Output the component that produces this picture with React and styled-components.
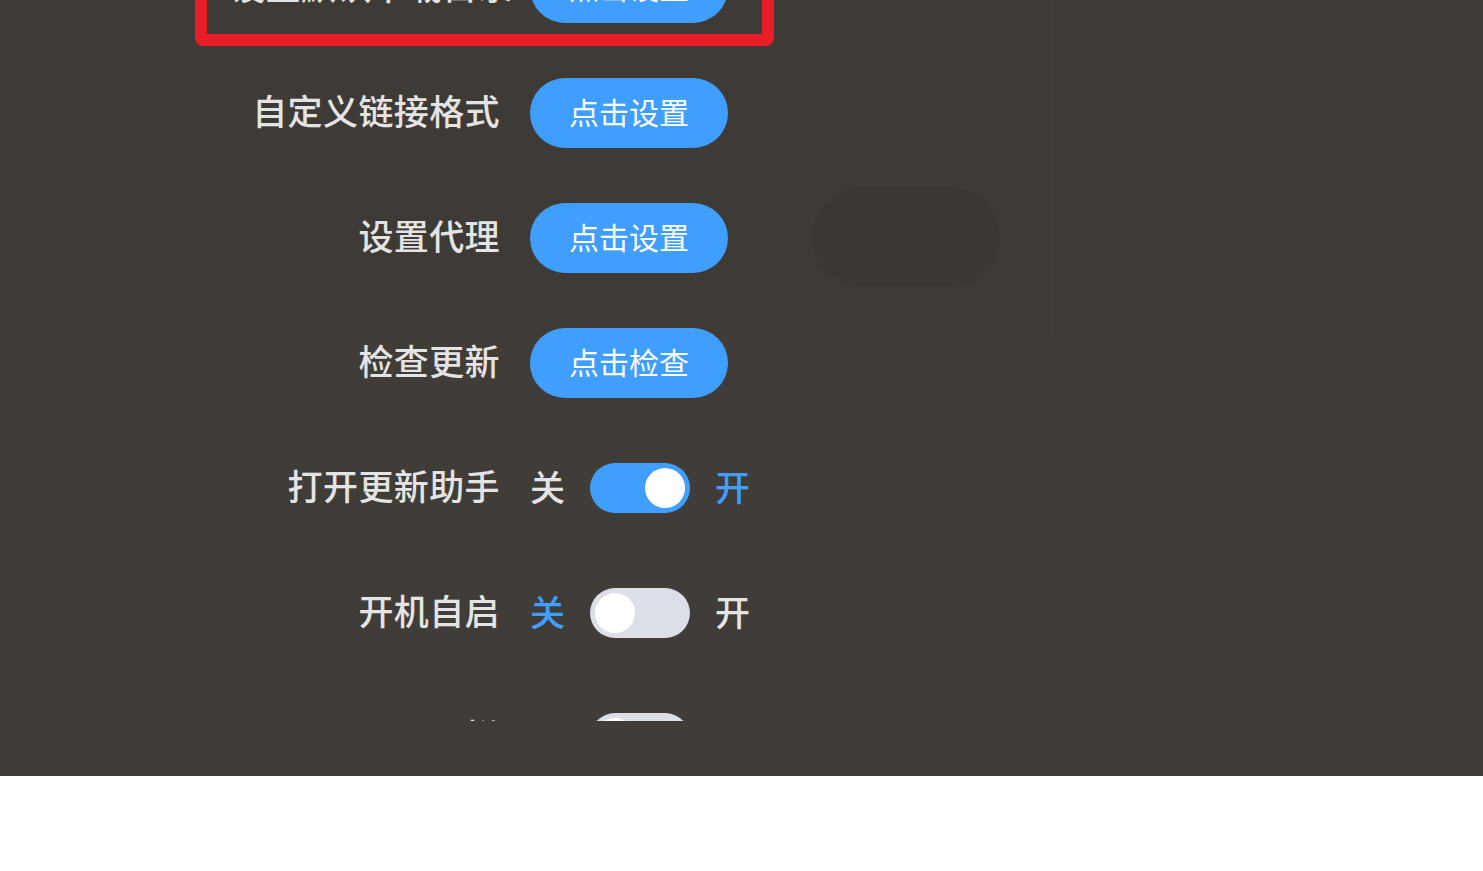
import React from "react";
import styled, { createGlobalStyle, css } from "styled-components";

const Global = createGlobalStyle`
  html, body { margin: 0; padding: 0; background: #ffffff; }
  body { font-family: "Noto Sans CJK SC", "Noto Sans", sans-serif; }
`;

const Stage = styled.div`
  position: relative;
  height: 776px;
  background: #403c37;
  overflow: hidden;
`;

const Shade = styled.div`
  position: absolute;
  left: 52px;
  top: 0;
  width: 998px;
  height: 335px;
  background: rgba(0, 0, 0, 0.025);
  pointer-events: none;
`;

const Ghost = styled.div`
  position: absolute;
  left: 812px;
  top: 187px;
  width: 188px;
  height: 100px;
  border-radius: 50px;
  background: rgba(0, 0, 0, 0.045);
  pointer-events: none;
`;

const Scroller = styled.div`
  position: relative;
  height: 721px;
  overflow: hidden;
`;

const Form = styled.div`
  display: flex;
  flex-direction: column;
  gap: 55px;
  margin-top: -47px;
  padding-left: 230px;
`;

const Row = styled.div`
  position: relative;
  display: flex;
  align-items: center;
  height: 70px;
  ${(p) =>
    p.$highlight &&
    css`
      &::before {
        content: "";
        position: absolute;
        left: -35px;
        width: 579px;
        top: -60px;
        bottom: -23px;
        box-sizing: border-box;
        border: 12px solid #e81d25;
        border-radius: 8px;
        pointer-events: none;
      }
    `}
`;

const Label = styled.div`
  width: 300px;
  box-sizing: border-box;
  padding-right: 30px;
  padding-bottom: 6px;
  text-align: right;
  font-size: 35px;
  font-weight: 500;
  letter-spacing: 0.4px;
  color: #e4e4e4;
  white-space: nowrap;
  line-height: 64px;
`;

const PillButton = styled.button`
  height: 70px;
  padding: 0 39px 4px;
  border: none;
  border-radius: 35px;
  background: #409eff;
  color: #ffffff;
  font-family: "Noto Sans CJK SC", "Noto Sans", sans-serif;
  font-size: 30px;
  font-weight: 400;
  line-height: 66px;
  cursor: pointer;
`;

const SwitchText = styled.span`
  font-size: 35px;
  font-weight: 500;
  line-height: 46px;
  padding-bottom: 4px;
  color: ${(p) => (p.$active ? "#409eff" : "#e4e4e4")};
`;

const SwitchCore = styled.span`
  position: relative;
  display: inline-block;
  width: 100px;
  height: 50px;
  margin: 0 25px;
  border-radius: 25px;
  background: ${(p) => (p.$on ? "#409eff" : "#dcdfe6")};
  &::after {
    content: "";
    position: absolute;
    top: 5px;
    left: ${(p) => (p.$on ? "55px" : "5px")};
    width: 40px;
    height: 40px;
    border-radius: 50%;
    background: #ffffff;
  }
`;

const Switch = ({ on }) => (
  <>
    <SwitchText $active={!on}>关</SwitchText>
    <SwitchCore $on={on} />
    <SwitchText $active={on}>开</SwitchText>
  </>
);

const buttonRows = [
  { label: "设置默认下载目录", action: "点击设置", highlight: true },
  { label: "自定义链接格式", action: "点击设置" },
  { label: "设置代理", action: "点击设置" },
  { label: "检查更新", action: "点击检查" },
];

const switchRows = [
  { label: "打开更新助手", on: true },
  { label: "开机自启", on: false },
  { label: "工具栏", on: false },
];

export default function App() {
  return (
    <>
      <Global />
      <Stage>
        <Shade />
        <Ghost />
        <Scroller>
          <Form>
            {buttonRows.map((r) => (
              <Row key={r.label} $highlight={r.highlight}>
                <Label>{r.label}</Label>
                <PillButton>{r.action}</PillButton>
              </Row>
            ))}
            {switchRows.map((r) => (
              <Row key={r.label}>
                <Label>{r.label}</Label>
                <Switch on={r.on} />
              </Row>
            ))}
          </Form>
        </Scroller>
      </Stage>
    </>
  );
}
